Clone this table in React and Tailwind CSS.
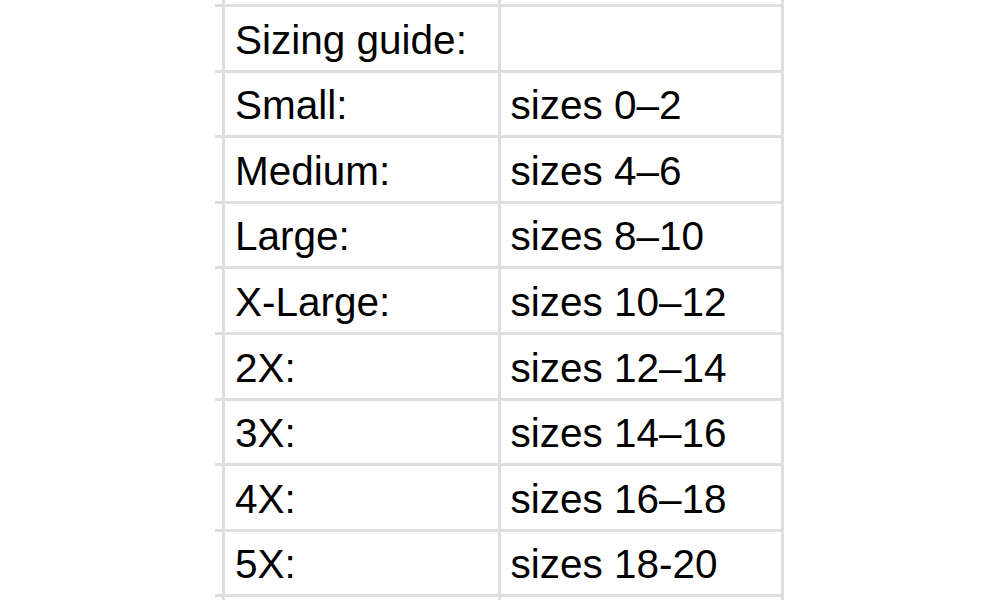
const rows = [
  ["", ""],
  ["Sizing guide:", ""],
  ["Small:", "sizes 0–2"],
  ["Medium:", "sizes 4–6"],
  ["Large:", "sizes 8–10"],
  ["X-Large:", "sizes 10–12"],
  ["2X:", "sizes 12–14"],
  ["3X:", "sizes 14–16"],
  ["4X:", "sizes 16–18"],
  ["5X:", "sizes 18-20"],
  ["", ""],
];

export default function App() {
  return (
    <div
      className="w-[1000px] h-[600px] bg-white overflow-hidden pl-[215px] text-black"
      style={{ fontFamily: '"Liberation Sans", Arial, sans-serif' }}
    >
      <div className="w-[569px] flex flex-col">
        {rows.map((row, i) => {
          const first = i === 0;
          const last = i === rows.length - 1;
          return (
            <div
              key={i}
              className={
                first
                  ? "h-[7px] flex border-b-[3px] border-[#dedede]"
                  : last
                  ? "h-[10px] flex"
                  : "h-[65.6px] flex border-b-[3px] border-[#dedede]"
              }
            >
              <div className="w-[7px]" />
              <div className="w-[276px] border-l-[3px] border-[#dedede] flex items-center pl-[10px] pt-[3px] text-[40.5px] leading-none">
                {row[0]}
              </div>
              <div className="w-[284px] border-l-[3px] border-[#dedede] flex items-center pl-[10px] pt-[3px] text-[40.5px] leading-none">
                {row[1]}
              </div>
              <div className="w-[2px] border-l-[3px] border-[#dedede]" />
            </div>
          );
        })}
      </div>
    </div>
  );
}
